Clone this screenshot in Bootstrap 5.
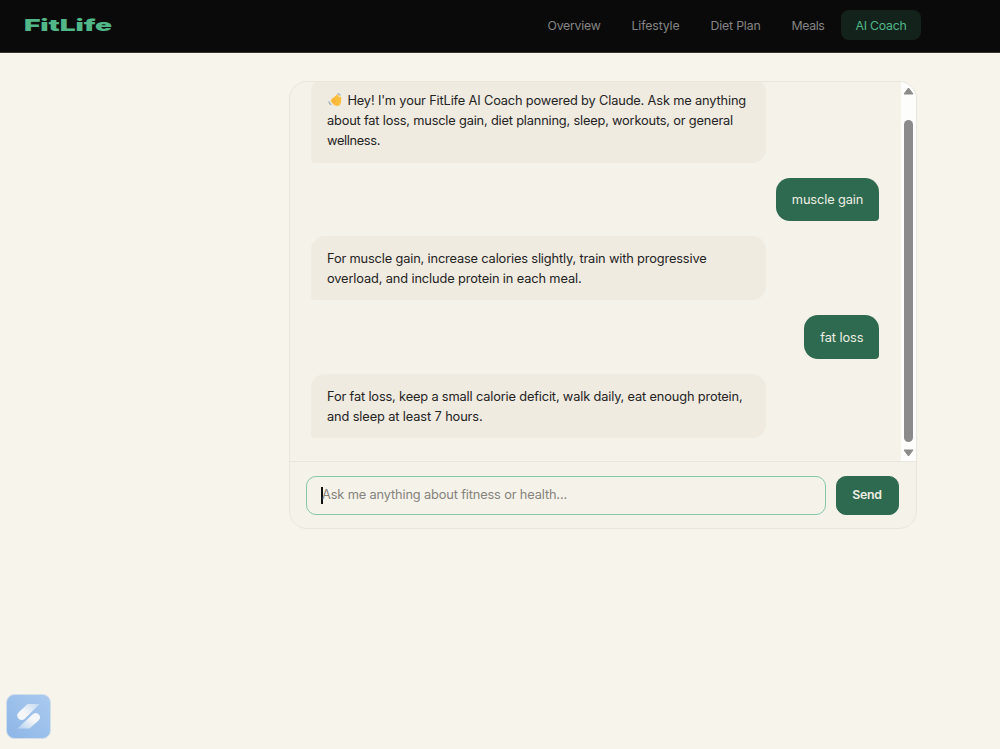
<!DOCTYPE html>
<html lang="en">
<head>
<meta charset="utf-8">
<meta name="viewport" content="width=device-width, initial-scale=1">
<title>FitLife – AI Coach</title>
<link href="https://cdn.jsdelivr.net/npm/bootstrap@5.3.0/dist/css/bootstrap.min.css" rel="stylesheet">
<style>
body{background:#f7f4ec;color:#24231f;font-family:Inter,"Liberation Sans",sans-serif;font-size:12.8px;line-height:20.2px;height:749px;overflow:hidden}
.topbar{background:#0a0a0a;height:53px;padding:0 79px 2px 24px;border-bottom:1px solid #3c3430}
.brand{color:#52b788;font-weight:900;font-size:16.4px;line-height:20px;transform:scaleX(1.72);transform-origin:left;letter-spacing:-.1px}
.topbar .nav{gap:3px}
.topbar .nav-link{color:#858585;font-size:12.3px;line-height:20px;padding:6px 14px 4px 14.5px;height:30px;border-radius:8px;white-space:nowrap}
.topbar .nav-link.active{color:#52b788;background:#13221b}
.chat{width:628px;height:448px;margin:28px 0 0 288.5px;border:1px solid #e9e6de;border-radius:18px;background:#f5f2ea}
.log{height:379px}
.messages{gap:15px;padding:0 21.2px 22.8px 21.5px;min-width:0}
.bubble{padding:12.6px 16px 11px;border-radius:14px;flex:none;white-space:nowrap}
.bot{width:455px;background:#efebe0;border-bottom-left-radius:4px}
.user{background:#2d6a4f;color:#efeee4;border-bottom-right-radius:4px}
.track{width:15px;background:#fdfdfc;border-top-right-radius:4px;padding:5px 0 4px}
.thumb{width:9px;height:322px;border-radius:5px;background:#8b8b8b;margin-bottom:7px}
.composer{border-top:1px solid #e9e6de;gap:10px;padding:14px 17px 14px 16.5px;height:68px}
.field{border:1px solid #84c8a8;border-radius:10px;height:39px;padding:0 14px;color:#85827c}
.caret{width:2px;height:17px;background:#111}
.send{--bs-btn-bg:#2d6a4f;--bs-btn-color:#efeee4;--bs-btn-border-color:#2d6a4f;width:63px;height:39px;border-radius:10px;font-size:12.3px;font-weight:600;letter-spacing:-.2px;padding:0}
.widget{left:5.5px;bottom:10px}
</style>
</head>
<body>
<nav class="topbar d-flex align-items-center justify-content-between">
  <div class="brand">FitLife</div>
  <div class="nav flex-nowrap">
    <a class="nav-link" style="width:81px"><span class="fit" data-w="53">Overview</span></a>
    <a class="nav-link" style="width:76px"><span class="fit" data-w="48">Lifestyle</span></a>
    <a class="nav-link" style="width:78px"><span class="fit" data-w="50">Diet Plan</span></a>
    <a class="nav-link" style="width:61px"><span class="fit" data-w="33">Meals</span></a>
    <a class="nav-link active" style="width:80px"><span class="fit" data-w="51">AI Coach</span></a>
  </div>
</nav>
<main class="chat overflow-hidden">
  <div class="log d-flex overflow-hidden">
    <div class="messages d-flex flex-column justify-content-end flex-grow-1">
      <div class="bubble bot"><span class="fit" data-w="419"><svg width="17" height="14" viewBox="-.5 0 17 14" style="vertical-align:-2px"><path d="M5.2 5.3 9.6 1.5Q10.5 1 11 2L11.3 4.8 12.3 3.5Q13.7 3.1 13.7 5L13.5 9.5Q12.6 13 9.3 13 7.2 12.8 5.8 11.2L3.2 8.5Q3 7.5 4 7.6L3.6 6.7Q3.8 5.4 5.2 5.3Z" fill="#fcbd3c"/><path d="m5 6 3 2.4M4.5 8l2.8 2" stroke="#eda12e" stroke-width=".7"/><path d="M1.2 8.3q.2 2.5 2.7 3.4M10 .8q2.3-.3 2.8 1.7" fill="none" stroke="#92a9b5" stroke-width="1.1"/></svg> Hey! I'm your FitLife AI Coach powered by Claude. Ask me anything</span><br><span class="fit" data-w="406">about fat loss, muscle gain, diet planning, sleep, workouts, or general</span><br><span class="fit" data-w="53">wellness.</span></div>
      <div class="bubble user align-self-end"><span class="fit" data-w="71.5">muscle gain</span></div>
      <div class="bubble bot"><span class="fit" data-w="379.5">For muscle gain, increase calories slightly, train with progressive</span><br><span class="fit" data-w="254.5">overload, and include protein in each meal.</span></div>
      <div class="bubble user align-self-end"><span class="fit" data-w="43">fat loss</span></div>
      <div class="bubble bot"><span class="fit" data-w="415.5">For fat loss, keep a small calorie deficit, walk daily, eat enough protein,</span><br><span class="fit" data-w="155.5">and sleep at least 7 hours.</span></div>
    </div>
    <div class="track d-flex flex-column align-items-center justify-content-between flex-shrink-0">
      <svg width="11" height="8" viewBox="0 0 11 8"><path d="M5.5 1 10 7H1Z" fill="#8b8b8b" stroke="#8b8b8b" stroke-linejoin="round"/></svg>
      <div class="thumb mt-auto"></div>
      <svg width="11" height="8" viewBox="0 0 11 8"><path d="M5.5 7 10 1H1Z" fill="#8b8b8b" stroke="#8b8b8b" stroke-linejoin="round"/></svg>
    </div>
  </div>
  <div class="composer d-flex">
    <div class="field d-flex align-items-center flex-grow-1"><i class="caret"></i><span class="fit" style="margin-left:-1px" data-w="245">Ask me anything about fitness or health...</span></div>
    <button class="btn send" type="button">Send</button>
  </div>
</main>
<svg class="widget position-fixed" width="45" height="45" viewBox="0 0 45 45">
  <defs><linearGradient id="tile" x1="0" y1="1" x2="1" y2="0"><stop stop-color="#8cb5e6"/><stop offset="1" stop-color="#abcbef"/></linearGradient>
  <linearGradient id="up" x1="0" y1="1" x2="1" y2="0"><stop offset=".4" stop-color="#f4f6f8"/><stop offset="1" stop-color="#c3d9f0"/></linearGradient>
  <linearGradient id="down" x1="1" y1="0" x2="0" y2="1"><stop offset=".4" stop-color="#f4f6f8"/><stop offset="1" stop-color="#b2cfee"/></linearGradient></defs>
  <rect x=".5" y=".5" width="44" height="44" rx="8" fill="url(#tile)" stroke="#d3e0ea"/>
  <path d="M21.5 10H33.5L19 24.5Q15.5 27.5 12.5 24.5T13 18Z" fill="url(#up)"/>
  <path d="M23.5 34.5H11.5L26.5 20.5Q30 17.5 32.8 20.5T32.5 26.5Z" fill="url(#down)"/>
</svg>
<script src="https://cdn.jsdelivr.net/npm/bootstrap@5.3.0/dist/js/bootstrap.bundle.min.js"></script>
<script>
// Track each line so that it fills its measure exactly.
document.querySelectorAll('.fit').forEach(function (el) {
  var gap = Number(el.dataset.w) - el.getBoundingClientRect().width;
  el.style.letterSpacing = gap / el.textContent.length + 'px';
});
</script>
</body>
</html>
